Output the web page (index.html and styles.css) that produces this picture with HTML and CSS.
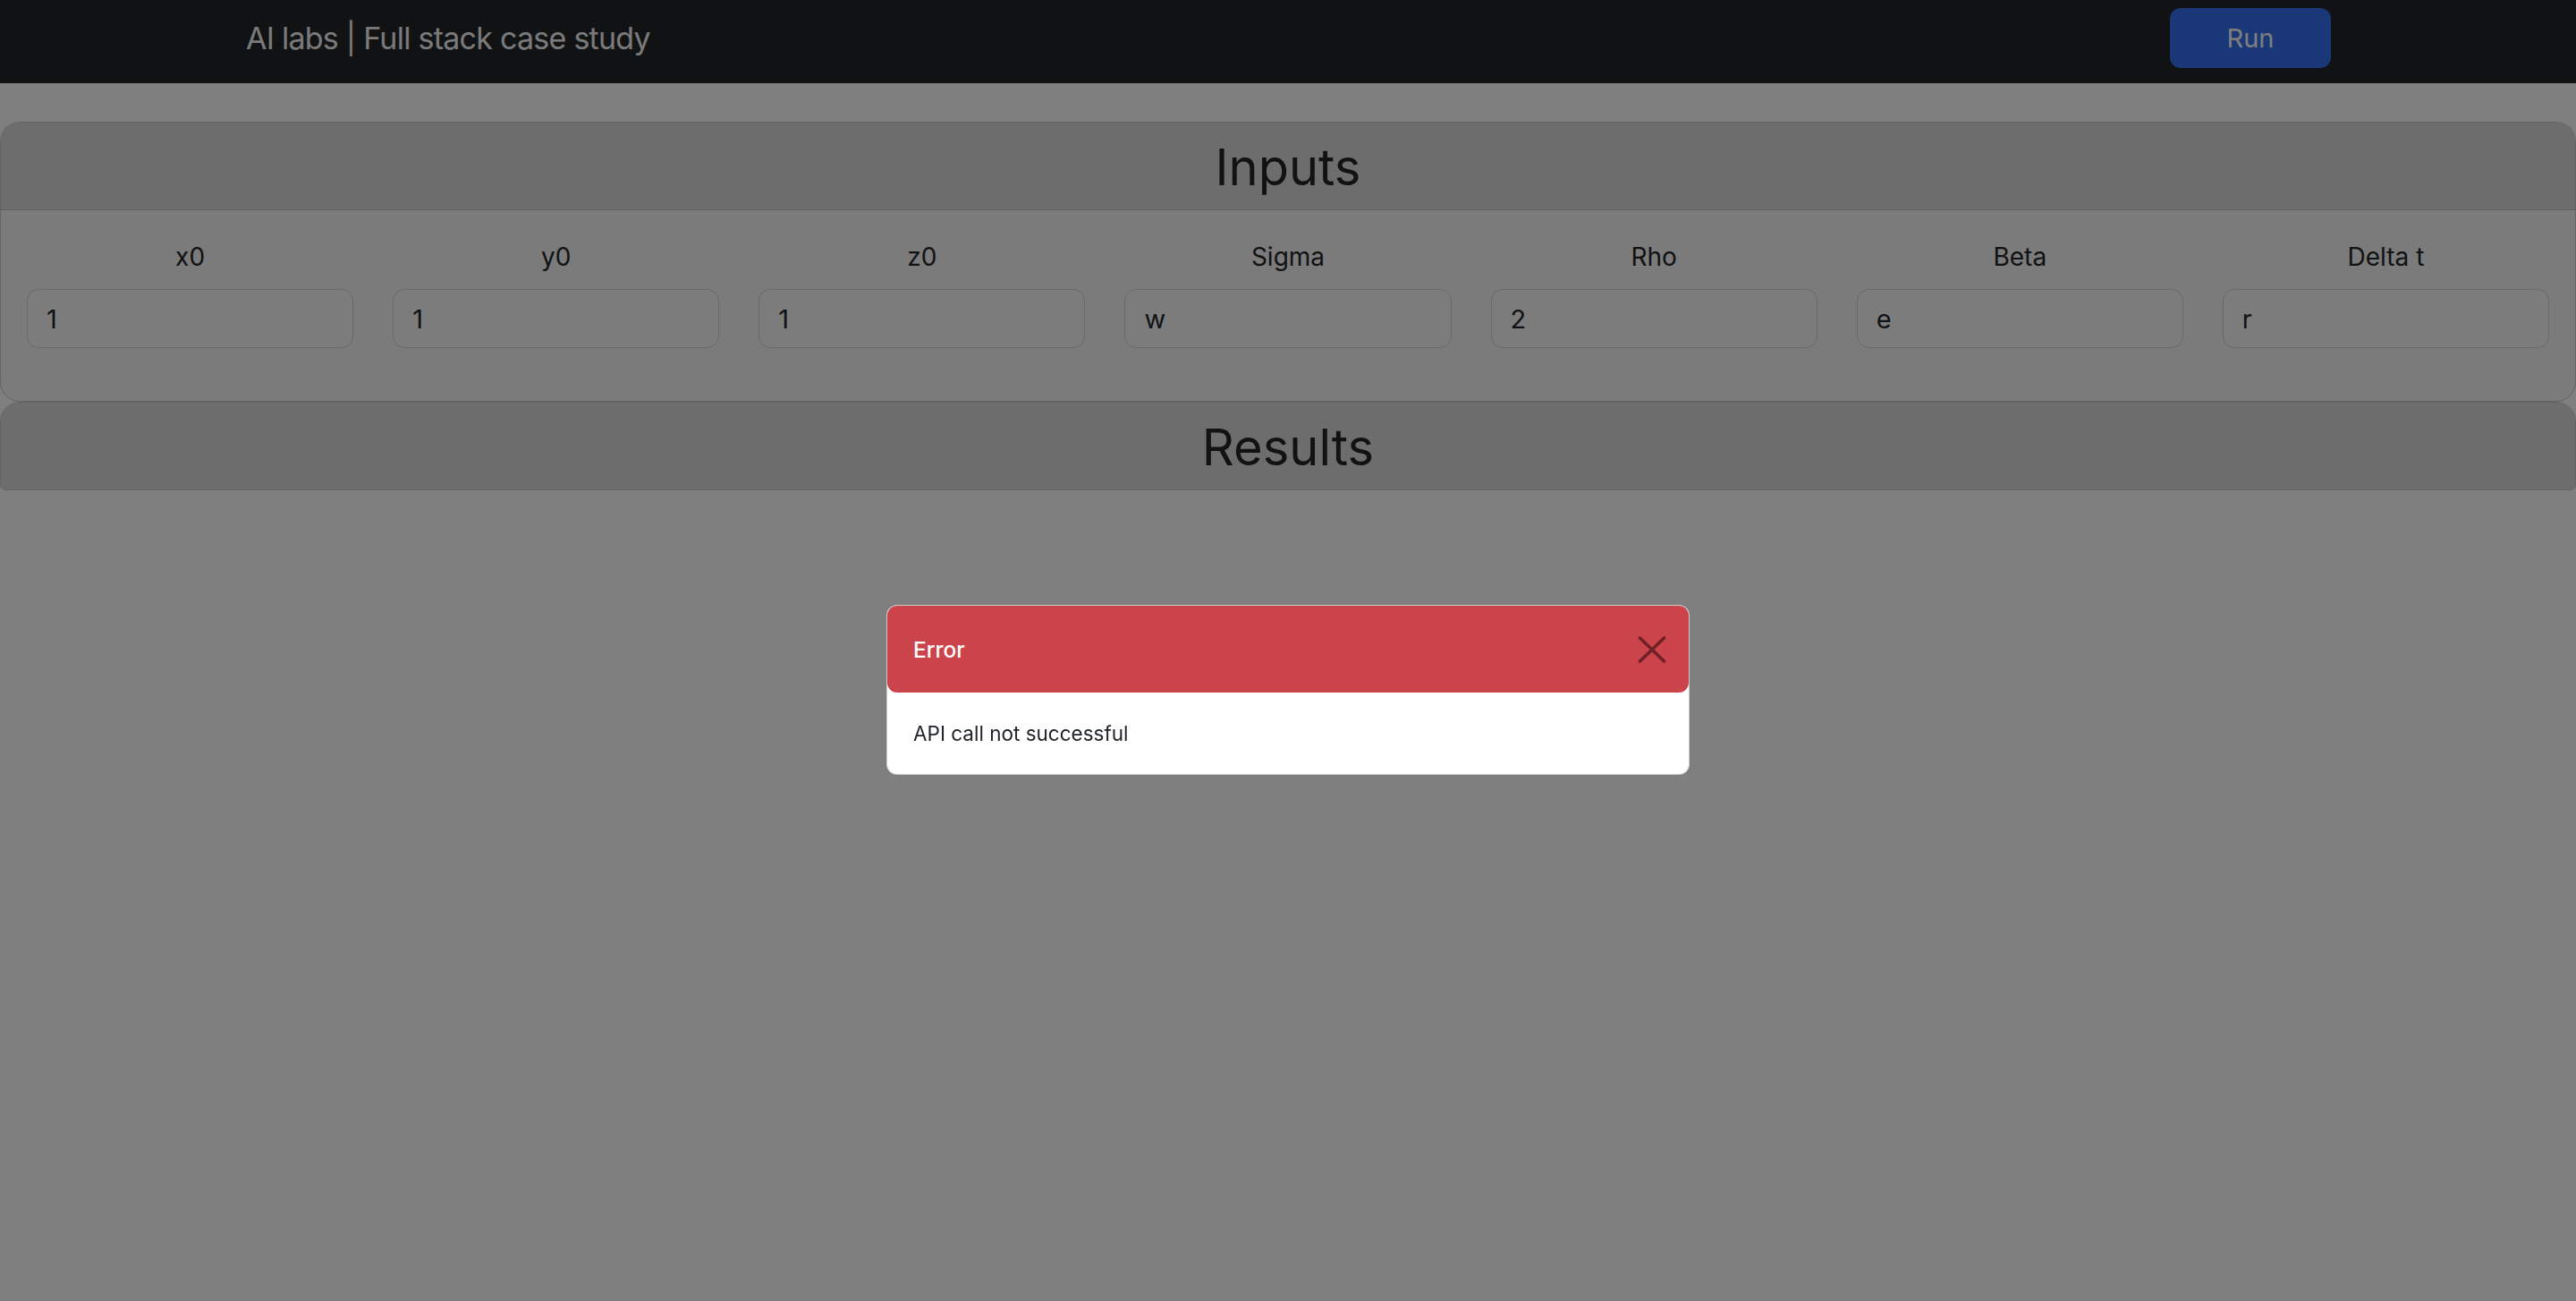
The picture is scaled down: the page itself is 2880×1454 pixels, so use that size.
FILE: index.html
```html
<!DOCTYPE html>
<html lang="en">
<head>
<meta charset="utf-8">
<title>AI labs | Full stack case study</title>
<link rel="stylesheet" href="styles.css">
</head>
<body>
<nav class="navbar">
  <div class="nav-inner">
    <span class="brand">AI labs | Full stack case study</span>
    <button class="btn-run" type="button">Run</button>
  </div>
</nav>
<main class="main">
  <section class="card">
    <header class="card-header"><h2 class="card-title">Inputs</h2></header>
    <div class="card-body">
      <div class="inputs-grid">
        <label class="field"><span class="field-label">x0</span><input class="field-input" value="1"></label>
        <label class="field"><span class="field-label">y0</span><input class="field-input" value="1"></label>
        <label class="field"><span class="field-label">z0</span><input class="field-input" value="1"></label>
        <label class="field"><span class="field-label">Sigma</span><input class="field-input" value="w"></label>
        <label class="field"><span class="field-label">Rho</span><input class="field-input" value="2"></label>
        <label class="field"><span class="field-label">Beta</span><input class="field-input" value="e"></label>
        <label class="field"><span class="field-label">Delta t</span><input class="field-input" value="r"></label>
      </div>
    </div>
  </section>
  <section class="card card-results">
    <header class="card-header"><h2 class="card-title">Results</h2></header>
  </section>
</main>
<div class="backdrop"></div>
<div class="modal" role="dialog">
  <div class="modal-header">
    <span class="modal-title">Error</span>
    <button class="modal-close" type="button" aria-label="Close">
      <svg width="32" height="30" viewBox="0 0 32 30"><path d="M2.5 2 L29.5 28 M29.5 2 L2.5 28" stroke="currentColor" stroke-width="3.6" stroke-linecap="round" fill="none"/></svg>
    </button>
  </div>
  <div class="modal-body">API call not successful</div>
</div>
</body>
</html>
```
FILE: styles.css
```css
* { box-sizing: border-box; }
html, body { margin: 0; padding: 0; }
body {
  background: #ffffff;
  font-family: Inter, "Noto Sans", "Liberation Sans", sans-serif;
  color: #212529;
  min-height: 1454px;
}
.navbar {
  height: 93px;
  background: #222428;
  display: flex;
  align-items: flex-start;
  padding-top: 9px;
}
.nav-inner {
  width: 100%;
  height: 67px;
  padding: 0 274px 0 275px;
  display: flex;
  align-items: center;
  justify-content: space-between;
}
.brand {
  font-size: 34px;
  color: #f4f4f4;
  letter-spacing: -0.75px;
  line-height: 1;
}
.btn-run {
  width: 180px;
  height: 67px;
  border: 0;
  border-radius: 12px;
  background: #3470ee;
  color: #fcfcfc;
  font-family: Inter, "Noto Sans", sans-serif;
  font-size: 29px;
  padding: 0;
}
.main { padding-top: 43px; }
.card {
  border: 1px solid #c8c8c8;
  border-radius: 22px;
  background: #f6f6f6;
  overflow: hidden;
}
.card-header {
  background: #dadada;
  border-bottom: 1px solid #c4c4c4;
  padding: 17px 0 13px;
  text-align: center;
}
.card-title {
  margin: 0;
  font-size: 56px;
  font-weight: 400;
  line-height: 67px;
  color: #212529;
}
.card-body { padding: 31px 29px 59px; }
.inputs-grid {
  display: grid;
  grid-template-columns: repeat(7, 1fr);
  column-gap: 44px;
}
.field { display: flex; flex-direction: column; align-items: stretch; }
.field-label {
  text-align: center;
  font-size: 28px;
  line-height: 42px;
  margin-bottom: 15px;
  color: #212529;
}
.field-input {
  height: 66px;
  border: 1px solid #d2d2d2;
  border-radius: 13px;
  background: #f8f8f8;
  padding: 0 21px;
  font-family: Inter, "Noto Sans", sans-serif;
  font-size: 29px;
  color: #212529;
  width: 100%;
}
.card-results { border-radius: 22px 22px 6px 6px; }
.card-results .card-header { border-bottom: 0; padding: 17px 0 13px; }
.backdrop {
  position: fixed;
  inset: 0;
  background: rgba(0, 0, 0, 0.5);
}
.modal {
  position: fixed;
  top: 676px;
  left: calc(50% - 449px);
  width: 898px;
  background: #fff;
  border: 1px solid rgba(0, 0, 0, 0.2);
  border-radius: 12px;
}
.modal-header {
  height: 97px;
  background: #cc444b;
  border-radius: 11px;
  display: flex;
  align-items: center;
  justify-content: space-between;
  padding: 0 25px 0 29px;
}
.modal-title {
  color: #ffffff;
  font-size: 24.5px;
  font-weight: 500;
}
.modal-close {
  border: 0;
  background: transparent;
  padding: 0;
  color: #6e2126;
  display: flex;
}
.modal-body {
  height: 91px;
  display: flex;
  align-items: center;
  padding: 0 29px;
  font-size: 22.5px;
  color: #212529;
}
```
